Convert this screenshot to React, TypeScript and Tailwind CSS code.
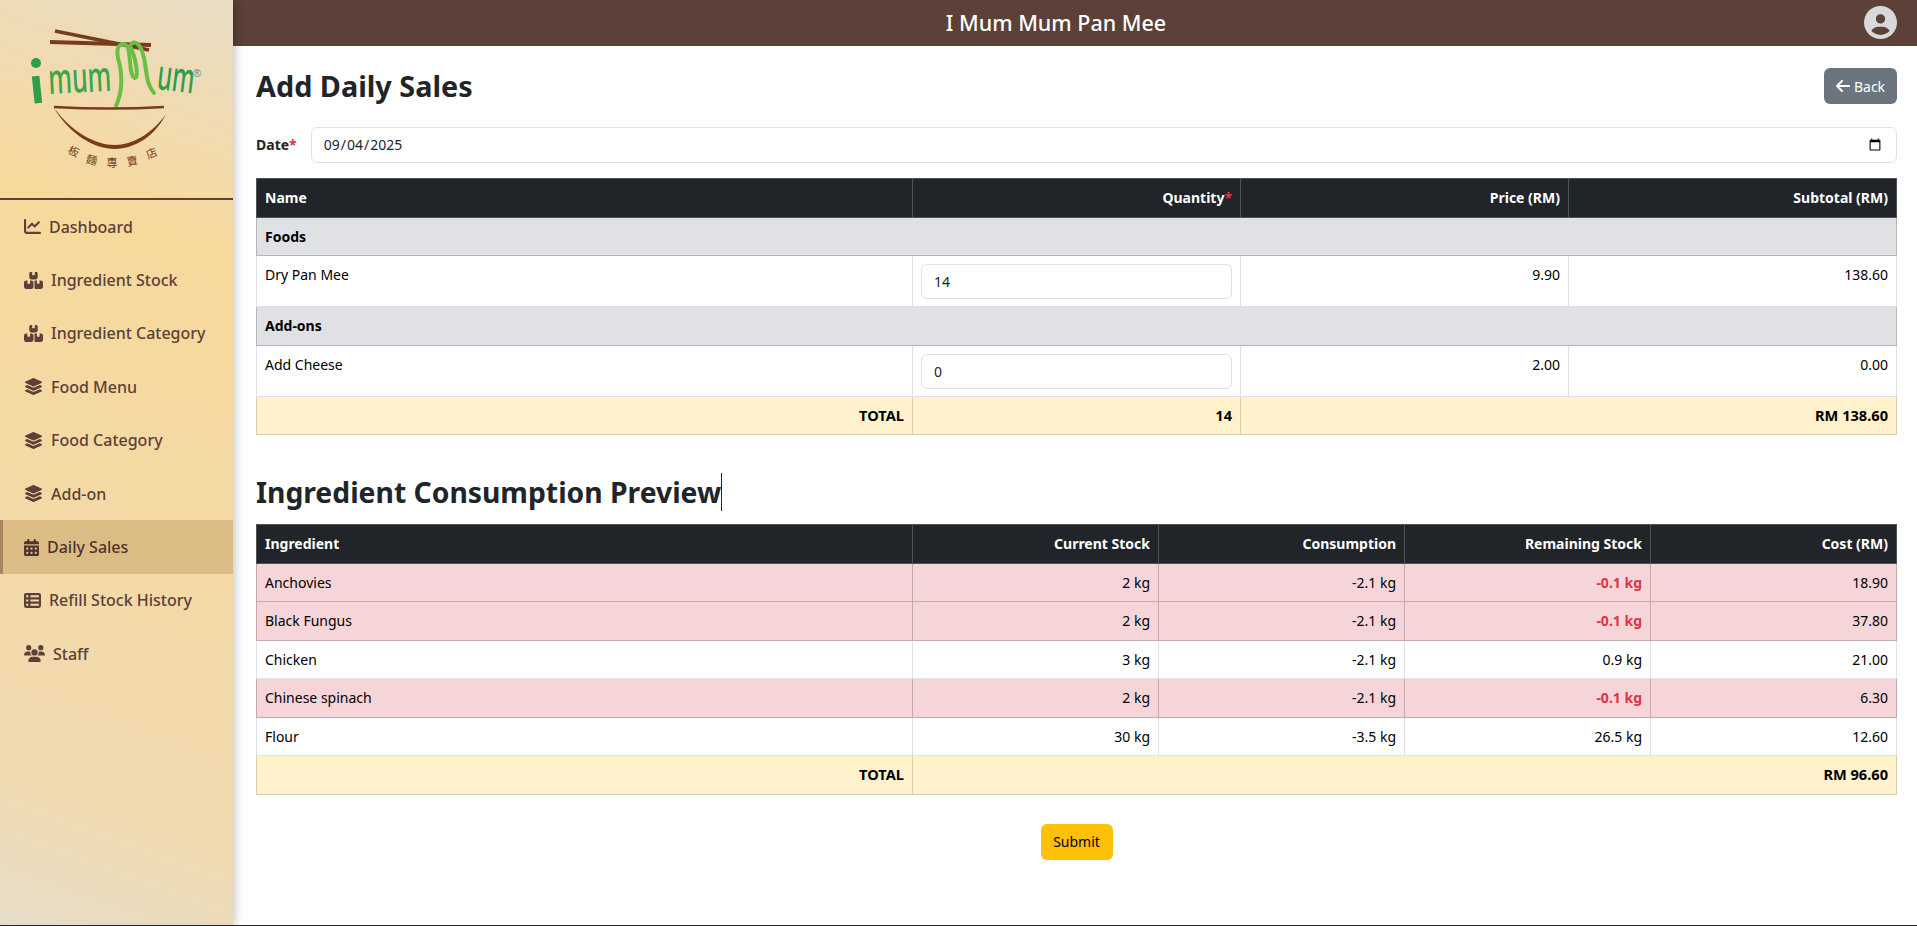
import {
  FaArrowLeft,
  FaBoxesStacked,
  FaCalendarDays,
  FaChartLine,
  FaCircleUser,
  FaLayerGroup,
  FaTableList,
  FaUsers,
} from "react-icons/fa6";
import type { IconType } from "react-icons";
import type { ReactNode } from "react";

type NavItem = { label: string; icon: IconType; iconSize: string; active?: boolean };

const navItems: NavItem[] = [
  { label: "Dashboard", icon: FaChartLine, iconSize: "w-[17px]" },
  { label: "Ingredient Stock", icon: FaBoxesStacked, iconSize: "w-[19px]" },
  { label: "Ingredient Category", icon: FaBoxesStacked, iconSize: "w-[19px]" },
  { label: "Food Menu", icon: FaLayerGroup, iconSize: "w-[19px]" },
  { label: "Food Category", icon: FaLayerGroup, iconSize: "w-[19px]" },
  { label: "Add-on", icon: FaLayerGroup, iconSize: "w-[19px]" },
  { label: "Daily Sales", icon: FaCalendarDays, iconSize: "w-[15px]", active: true },
  { label: "Refill Stock History", icon: FaTableList, iconSize: "w-[17px]" },
  { label: "Staff", icon: FaUsers, iconSize: "w-[21px]" },
];

const ingredients = [
  { name: "Anchovies", stock: "2 kg", used: "-2.1 kg", left: "-0.1 kg", cost: "18.90", low: true },
  { name: "Black Fungus", stock: "2 kg", used: "-2.1 kg", left: "-0.1 kg", cost: "37.80", low: true },
  { name: "Chicken", stock: "3 kg", used: "-2.1 kg", left: "0.9 kg", cost: "21.00", low: false },
  { name: "Chinese spinach", stock: "2 kg", used: "-2.1 kg", left: "-0.1 kg", cost: "6.30", low: true },
  { name: "Flour", stock: "30 kg", used: "-3.5 kg", left: "26.5 kg", cost: "12.60", low: false },
];

function Logo() {
  return (
    <svg viewBox="0 0 240 210" className="h-[210px] w-[240px] shrink-0" aria-label="I Mum Mum logo">
      <path d="M55 31 L149 50" stroke="#7a3b1c" strokeWidth="3.5" fill="none" />
      <path d="M50 42 L151 45" stroke="#7a3b1c" strokeWidth="4" fill="none" />
      <path
        d="M116 106 C124 88 122 72 118 58 C115 44 124 40 128 48 C131 58 129 76 135 78 C139 78 136 58 130 46 C134 38 141 44 144 58 C147 72 146 84 154 93"
        stroke="#6cbf45"
        strokeWidth="4"
        fill="none"
        strokeLinecap="round"
      />
      <text x="31" y="104" fill="#2f9e4c" fontFamily="'Noto Sans', sans-serif" fontSize="50" fontWeight="700" transform="rotate(-6 31 104)">ı</text>
      <circle cx="36" cy="63" r="5" fill="#2f9e4c" />
      <text x="49" y="94" fill="#3ba54b" fontFamily="'Noto Sans', sans-serif" fontSize="42" fontWeight="500" textLength="63" lengthAdjust="spacingAndGlyphs" transform="rotate(-3 49 94)">mum</text>
      <text x="156" y="89" fill="#2f9e4c" fontFamily="'Noto Sans', sans-serif" fontSize="42" fontWeight="500" textLength="37" lengthAdjust="spacingAndGlyphs" transform="rotate(7 156 89)">um</text>
      <text x="193" y="77" fill="#7d7d6a" fontFamily="'Liberation Sans', sans-serif" fontSize="11">®</text>
      <path d="M54 107 Q110 110 164 107" stroke="#7a3b1c" strokeWidth="2.5" fill="none" />
      <path d="M54 108 C70 135 95 149 115 149 C135 149 156 135 166 114 C152 134 132 145 115 145 C95 145 72 132 54 108 Z" fill="#7a3b1c" />
      <g fill="#7a3b1c" fontFamily="'Noto Sans CJK TC', sans-serif" fontSize="11" textAnchor="middle">
        <text x="72" y="155" transform="rotate(25 72 155)">板</text>
        <text x="91" y="164" transform="rotate(12 91 164)">麵</text>
        <text x="112" y="167">專</text>
        <text x="133" y="165" transform="rotate(-10 133 165)">賣</text>
        <text x="153" y="157" transform="rotate(-22 153 157)">店</text>
      </g>
    </svg>
  );
}

function Sidebar() {
  return (
    <aside className="z-10 flex w-[233px] shrink-0 flex-col bg-[linear-gradient(200deg,#e8dcc5_0%,#f8d99c_26%,#f0dab0_85%,#e6dcc8_100%)] shadow-[3px_0_8px_rgba(0,0,0,0.2)]">
      <div className="h-[198px] overflow-hidden">
        <Logo />
      </div>
      <div className="h-[2px] bg-[#5d4037]" />
      <nav className="flex flex-col">
        {navItems.map(({ label, icon: Icon, iconSize, active }) => (
          <a
            key={label}
            className={
              active
                ? "flex h-[53.4px] items-center gap-2 border-l-[3px] border-[#a9845f] bg-[#dcbc85] pl-[21px] text-[16px] font-medium text-[#4e342e]"
                : "flex h-[53.4px] items-center gap-2 pl-[24px] text-[16px] font-medium text-[#5d4037]"
            }
          >
            <Icon className={`h-[17px] shrink-0 ${iconSize}`} />
            <span>{label}</span>
          </a>
        ))}
      </nav>
    </aside>
  );
}

function Th({ children, right }: { children: ReactNode; right?: boolean }) {
  return (
    <th className={`border border-[#4d5154] bg-[#212529] px-2 py-2 text-[14px] font-bold leading-[21.5px] text-white ${right ? "text-right" : "text-left"}`}>
      {children}
    </th>
  );
}

function Td({ children, right, className = "border-[#dee2e6] text-black" }: { children?: ReactNode; right?: boolean; className?: string }) {
  return (
    <td className={`border px-2 pt-2 text-[14px] leading-[21.5px] ${right ? "text-right" : "text-left"} ${className}`}>
      {children}
    </td>
  );
}

function GroupRow({ label }: { label: string }) {
  return (
    <tr>
      <td colSpan={4} className="border border-[#b4b6b9] bg-[#e0e1e4] px-2 py-2 text-[14px] font-bold leading-[21.5px] text-black">
        {label}
      </td>
    </tr>
  );
}

function QtyRow({ name, qty, price, subtotal }: { name: string; qty: string; price: string; subtotal: string }) {
  const plain = "border-[#dee2e6] pb-[7px] text-black align-top";
  return (
    <tr>
      <Td className={plain}>{name}</Td>
      <Td className={plain}>
        <input
          defaultValue={qty}
          className="block h-[35px] w-full rounded-[6px] border border-[#dee2e6] bg-white px-3 text-[14px] text-[#212529] outline-none"
        />
      </Td>
      <Td right className={plain}>{price}</Td>
      <Td right className={plain}>{subtotal}</Td>
    </tr>
  );
}

const totalCell = "border border-[#d8cfae] bg-[#fff2cd] px-2 py-2 text-right text-[14.6px] font-bold leading-[21.5px] text-black";

export default function App() {
  return (
    <div className="flex h-[926px] overflow-hidden border-b border-[#212529] bg-white font-['Noto_Sans',sans-serif] text-[#212529]">
      <Sidebar />
      <div className="flex min-w-0 flex-1 flex-col">
        <header className="relative flex h-[46px] shrink-0 items-center justify-center bg-[#5d4037] pr-[38px] text-[21.5px] font-medium text-white">
          I Mum Mum Pan Mee
          <FaCircleUser className="absolute right-[20px] top-[6px] text-[33px] text-[#d9d9d9]" />
        </header>
        <main className="flex flex-1 flex-col pl-[23px] pr-[20px]">
          <div className="mt-[22px] flex h-[36px] items-center justify-between">
            <h1 className="text-[28.8px] font-bold">Add Daily Sales</h1>
            <button className="flex h-[36px] w-[73px] items-center justify-center gap-1 rounded-[6px] bg-[#6c757d] text-[14px] text-white">
              <FaArrowLeft className="h-[16px] w-[14px] shrink-0" />
              Back
            </button>
          </div>

          <div className="mt-[23px] flex items-center gap-[14px]">
            <label className="-mt-[1px] text-[14px] font-bold">
              Date<span className="text-[#dc3545]">*</span>
            </label>
            <input
              type="date"
              defaultValue="2025-09-04"
              className="h-[36px] flex-1 rounded-[6px] border border-[#dee2e6] pl-[11px] pr-3 pb-[1px] text-[14px] text-[#212529] outline-none"
            />
          </div>

          <table className="mt-[15px] w-full table-fixed border-collapse">
            <colgroup>
              <col className="w-[40%]" />
              <col className="w-[20%]" />
              <col className="w-[20%]" />
              <col className="w-[20%]" />
            </colgroup>
            <thead>
              <tr>
                <Th>Name</Th>
                <Th right>
                  Quantity<span className="text-[#dc3545]">*</span>
                </Th>
                <Th right>Price (RM)</Th>
                <Th right>Subtotal (RM)</Th>
              </tr>
            </thead>
            <tbody>
              <GroupRow label="Foods" />
              <QtyRow name="Dry Pan Mee" qty="14" price="9.90" subtotal="138.60" />
              <GroupRow label="Add-ons" />
              <QtyRow name="Add Cheese" qty="0" price="2.00" subtotal="0.00" />
              <tr>
                <td className={totalCell}>TOTAL</td>
                <td className={totalCell}>14</td>
                <td colSpan={2} className={totalCell}>RM 138.60</td>
              </tr>
            </tbody>
          </table>

          <h2 className="mt-[37px] text-[28.3px] font-bold leading-[40px]">
            <span className="border-r border-[#212529]">Ingredient Consumption Preview</span>
          </h2>

          <table className="mt-[12px] w-full table-fixed border-collapse">
            <colgroup>
              <col className="w-[40%]" />
              <col className="w-[15%]" />
              <col className="w-[15%]" />
              <col className="w-[15%]" />
              <col className="w-[15%]" />
            </colgroup>
            <thead>
              <tr>
                <Th>Ingredient</Th>
                <Th right>Current Stock</Th>
                <Th right>Consumption</Th>
                <Th right>Remaining Stock</Th>
                <Th right>Cost (RM)</Th>
              </tr>
            </thead>
            <tbody>
              {ingredients.map((row) => {
                const tone = row.low ? "border-[#c6a9ae] bg-[#f6d5d9] pb-2 text-black" : "border-[#dee2e6] pb-2 text-black";
                const leftTone = row.low ? "border-[#c6a9ae] bg-[#f6d5d9] pb-2 font-bold text-[#dc3545]" : tone;
                return (
                  <tr key={row.name}>
                    <Td className={tone}>{row.name}</Td>
                    <Td right className={tone}>{row.stock}</Td>
                    <Td right className={tone}>{row.used}</Td>
                    <Td right className={leftTone}>{row.left}</Td>
                    <Td right className={tone}>{row.cost}</Td>
                  </tr>
                );
              })}
              <tr>
                <td className={totalCell}>TOTAL</td>
                <td colSpan={4} className={totalCell}>RM 96.60</td>
              </tr>
            </tbody>
          </table>

          <div className="mt-[29px] flex justify-center">
            <button className="h-[36px] w-[72px] rounded-[6px] bg-[#ffc107] text-[14px] text-black">Submit</button>
          </div>
        </main>
      </div>
    </div>
  );
}
